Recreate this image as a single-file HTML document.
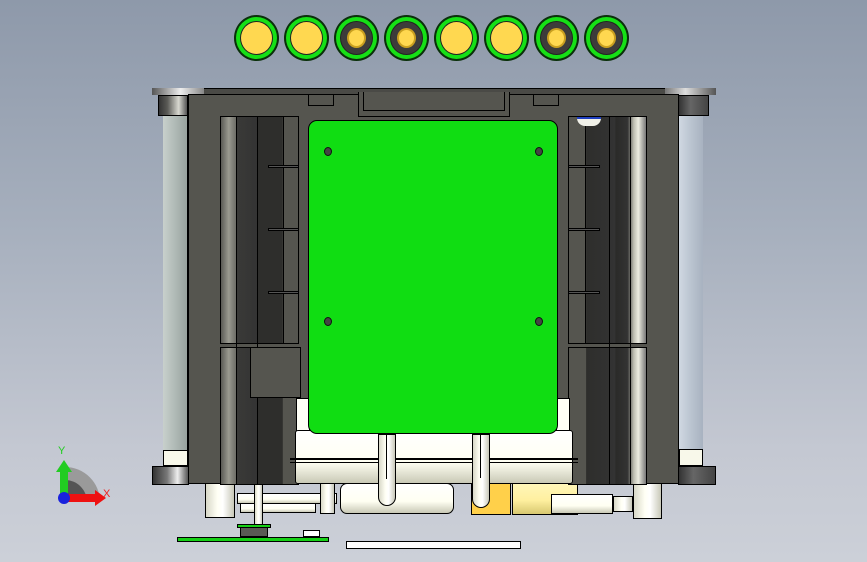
<!DOCTYPE html>
<html><head><meta charset="utf-8"><style>
*{margin:0;padding:0;box-sizing:border-box}
body{width:867px;height:562px;overflow:hidden;position:relative;background:linear-gradient(180deg,#8e99aa 0%,#a6afbd 40%,#c4c8d2 80%,#ccd0d8 100%);font-family:"Liberation Sans",sans-serif}
div{position:absolute}
.b{border:1px solid #000}
.dk{background:#55554f}
.w{background:linear-gradient(90deg,#d8d8c8,#fffff4 40%,#fff 60%,#c8c8b8);border:1px solid #000}
.wh{background:linear-gradient(180deg,#fff,#fffff2 60%,#c9c9b6);border:1px solid #000}
.c{border-radius:50%;width:45px;height:46px;top:15px;background:#16e016;border:2px solid #0a300a}
.c i{position:absolute;border-radius:50%;border:1px solid #222}
.lc{background:linear-gradient(90deg,#5a5a55 0%,#9a9a90 10%,#6a6a64 20%,#3a3a38 20.5%,#333 47%,#2e2e2c 47.5%,#2e2e2c 80%,#55554f 80.5%)}
.rc{background:linear-gradient(90deg,#55554f 0%,#55554f 22%,#2e2e2c 22.5%,#333 60%,#2a2a28 60.5%,#333 76%,#bcbcb0 84%,#ecece0 90%,#777 100%)}
</style></head><body>

<!-- circles -->
<div class="c" style="left:234px"><i style="left:4px;top:4px;width:33px;height:34px;background:#ffd850"></i></div>
<div class="c" style="left:284px"><i style="left:4px;top:4px;width:33px;height:34px;background:#ffd850"></i></div>
<div class="c" style="left:334px"><i style="left:4px;top:4px;width:33px;height:34px;background:#3c3c3a"></i><i style="left:11px;top:11px;width:19px;height:20px;background:#ffd850;border:2px solid #c9a020"></i></div>
<div class="c" style="left:384px"><i style="left:4px;top:4px;width:33px;height:34px;background:#3c3c3a"></i><i style="left:11px;top:11px;width:19px;height:20px;background:#ffd850;border:2px solid #c9a020"></i></div>
<div class="c" style="left:434px"><i style="left:4px;top:4px;width:33px;height:34px;background:#ffd850"></i></div>
<div class="c" style="left:484px"><i style="left:4px;top:4px;width:33px;height:34px;background:#ffd850"></i></div>
<div class="c" style="left:534px"><i style="left:4px;top:4px;width:33px;height:34px;background:#3c3c3a"></i><i style="left:11px;top:11px;width:19px;height:20px;background:#ffd850;border:2px solid #c9a020"></i></div>
<div class="c" style="left:584px"><i style="left:4px;top:4px;width:33px;height:34px;background:#3c3c3a"></i><i style="left:11px;top:11px;width:19px;height:20px;background:#ffd850;border:2px solid #c9a020"></i></div>

<!-- bottom parts (behind body) -->
<div class="w" style="left:205px;top:480px;width:30px;height:38px"></div>
<div class="wh" style="left:237px;top:493px;width:100px;height:11px"></div>
<div class="wh" style="left:240px;top:503px;width:76px;height:10px"></div>
<div class="w" style="left:320px;top:483px;width:15px;height:31px"></div>
<div class="wh" style="left:340px;top:483px;width:114px;height:31px;border-radius:7px"></div>
<div style="left:471px;top:480px;width:40px;height:35px;background:#ffd04a;border:1px solid #000"></div>
<div style="left:512px;top:478px;width:66px;height:37px;background:linear-gradient(180deg,#fff8c0,#fff0a0 60%,#d8c870);border:1px solid #000"></div>
<div class="wh" style="left:551px;top:494px;width:62px;height:20px"></div>
<div class="w" style="left:613px;top:496px;width:20px;height:16px"></div>
<div class="w" style="left:633px;top:480px;width:29px;height:39px"></div>
<div class="w" style="left:254px;top:456px;width:9px;height:80px;border-radius:0 0 4px 4px"></div>
<div style="left:237px;top:524px;width:34px;height:4px;background:#16d016;border:1px solid #000"></div>
<div style="left:240px;top:528px;width:28px;height:9px;border:1px solid #000;border-top:none;background:#5a5a55"></div>
<div style="left:303px;top:530px;width:17px;height:7px;background:#fff;border:1px solid #000"></div>
<div style="left:177px;top:537px;width:152px;height:5px;background:#16d016;border:1px solid #000"></div>
<div style="left:346px;top:541px;width:175px;height:8px;background:#fff;border:1px solid #000"></div>

<!-- top bar -->
<div style="left:152px;top:88px;width:564px;height:7px;background:#4a4a46;border:1px solid #000"></div>
<div style="left:152px;top:88px;width:52px;height:7px;background:linear-gradient(90deg,#555,#eee 55%,#888)"></div>
<div style="left:665px;top:88px;width:51px;height:7px;background:linear-gradient(90deg,#777,#ddd 40%,#555)"></div>

<!-- body -->
<div class="dk b" style="left:188px;top:94px;width:491px;height:390px"></div>
<div class="b" style="left:358px;top:92px;width:152px;height:25px;border-top:none;background:#55554f"></div>
<div class="b" style="left:363px;top:92px;width:142px;height:19px;border-top:none;background:#55554f"></div>
<div class="b" style="left:308px;top:94px;width:26px;height:12px;border-top:none"></div>
<div class="b" style="left:533px;top:94px;width:26px;height:12px;border-top:none"></div>

<!-- pillars -->
<div style="left:158px;top:95px;width:30px;height:21px;background:linear-gradient(90deg,#333,#5a5a56 30%,#d8d8d0 70%,#555);border:1px solid #000"></div>
<div style="left:163px;top:116px;width:25px;height:335px;background:linear-gradient(90deg,#c8d0cc,#b0bab6 50%,#98a29e);border-right:1px solid #000"></div>
<div style="left:163px;top:450px;width:25px;height:16px;background:#f8f8ea;border:1px solid #000"></div>
<div style="left:152px;top:466px;width:37px;height:19px;background:linear-gradient(90deg,#333,#777 40%,#eee 70%,#555);border:1px solid #000"></div>
<div style="left:678px;top:95px;width:31px;height:21px;background:linear-gradient(90deg,#333,#666 40%,#444);border:1px solid #000"></div>
<div style="left:679px;top:116px;width:24px;height:335px;background:linear-gradient(90deg,#d0d8e2,#bac4d0 50%,#a8b2c0)"></div>
<div style="left:679px;top:449px;width:24px;height:17px;background:#f8f8ea;border:1px solid #000"></div>
<div style="left:678px;top:466px;width:38px;height:19px;background:linear-gradient(90deg,#333,#666 40%,#444);border:1px solid #000"></div>

<!-- left channels -->
<div class="b lc" style="left:220px;top:116px;width:79px;height:228px"></div>
<div class="b lc" style="left:220px;top:347px;width:79px;height:138px"></div>
<div style="left:236px;top:116px;width:1px;height:368px;background:#000"></div>
<div style="left:257px;top:116px;width:1px;height:368px;background:#000"></div>
<div style="left:283px;top:116px;width:1px;height:228px;background:#000"></div>
<div class="b" style="left:268px;top:165px;width:31px;height:3px;background:#555"></div>
<div class="b" style="left:268px;top:228px;width:31px;height:3px;background:#555"></div>
<div class="b" style="left:268px;top:291px;width:31px;height:3px;background:#555"></div>
<div class="dk b" style="left:250px;top:347px;width:51px;height:51px"></div>

<!-- right channels -->
<div class="b rc" style="left:568px;top:116px;width:79px;height:228px"></div>
<div class="b rc" style="left:568px;top:347px;width:79px;height:138px"></div>
<div style="left:585px;top:116px;width:1px;height:228px;background:#000"></div>
<div style="left:609px;top:116px;width:1px;height:368px;background:#000"></div>
<div style="left:630px;top:116px;width:1px;height:368px;background:#000"></div>
<div class="b" style="left:568px;top:165px;width:32px;height:3px;background:#555"></div>
<div class="b" style="left:568px;top:228px;width:32px;height:3px;background:#555"></div>
<div class="b" style="left:568px;top:291px;width:32px;height:3px;background:#555"></div>
<div style="left:577px;top:117px;width:24px;height:9px;background:#f0f0e8;border-top:2px solid #2040c0;border-radius:0 0 8px 8px"></div>

<!-- white housing under panel -->
<div style="left:296px;top:398px;width:14px;height:40px;background:#fffff6;border:1px solid #000"></div>
<div style="left:556px;top:398px;width:14px;height:40px;background:#fffff6;border:1px solid #000"></div>
<div class="wh" style="left:295px;top:430px;width:278px;height:54px;border-radius:3px"></div>
<div style="left:290px;top:458px;width:288px;height:2px;background:#000"></div>
<div style="left:290px;top:462px;width:288px;height:1px;background:#000"></div>

<!-- green panel -->
<div style="left:308px;top:120px;width:250px;height:314px;background:#10dd12;border:1px solid #000;border-radius:9px"></div>
<div style="left:324px;top:147px;width:8px;height:9px;border-radius:50%;background:#444;border:1px solid #111"></div>
<div style="left:535px;top:147px;width:8px;height:9px;border-radius:50%;background:#444;border:1px solid #111"></div>
<div style="left:324px;top:317px;width:8px;height:9px;border-radius:50%;background:#444;border:1px solid #111"></div>
<div style="left:535px;top:317px;width:8px;height:9px;border-radius:50%;background:#444;border:1px solid #111"></div>

<!-- pipes -->
<div class="w" style="left:378px;top:434px;width:18px;height:72px;border-radius:0 0 9px 9px"></div>
<div style="left:386px;top:434px;width:1px;height:45px;background:#000"></div>
<div class="w" style="left:472px;top:434px;width:18px;height:74px;border-radius:0 0 9px 9px"></div>
<div style="left:480px;top:434px;width:1px;height:44px;background:#000"></div>

<!-- triad -->
<svg style="position:absolute;left:40px;top:430px" width="90" height="80">
<path d="M25 37 A35 35 0 0 1 60 72 L25 72Z" fill="#9a9a9a"/>
<path d="M25 50 A22 22 0 0 1 47 72 L25 72Z" fill="#555"/>
<rect x="20" y="40" width="8" height="32" fill="#22cc22"/>
<polygon points="16,42 24,30 32,42" fill="#22cc22"/>
<rect x="25" y="64" width="30" height="8" fill="#ee1111"/>
<polygon points="55,60 66,68 55,76" fill="#ee1111"/>
<circle cx="24" cy="68" r="6" fill="#1a22dd"/>
<text x="18" y="24" font-size="11" fill="#22cc22" font-family="Liberation Sans">Y</text>
<text x="63" y="67" font-size="11" fill="#ee2222" font-family="Liberation Sans">X</text>
</svg>
</body></html>
